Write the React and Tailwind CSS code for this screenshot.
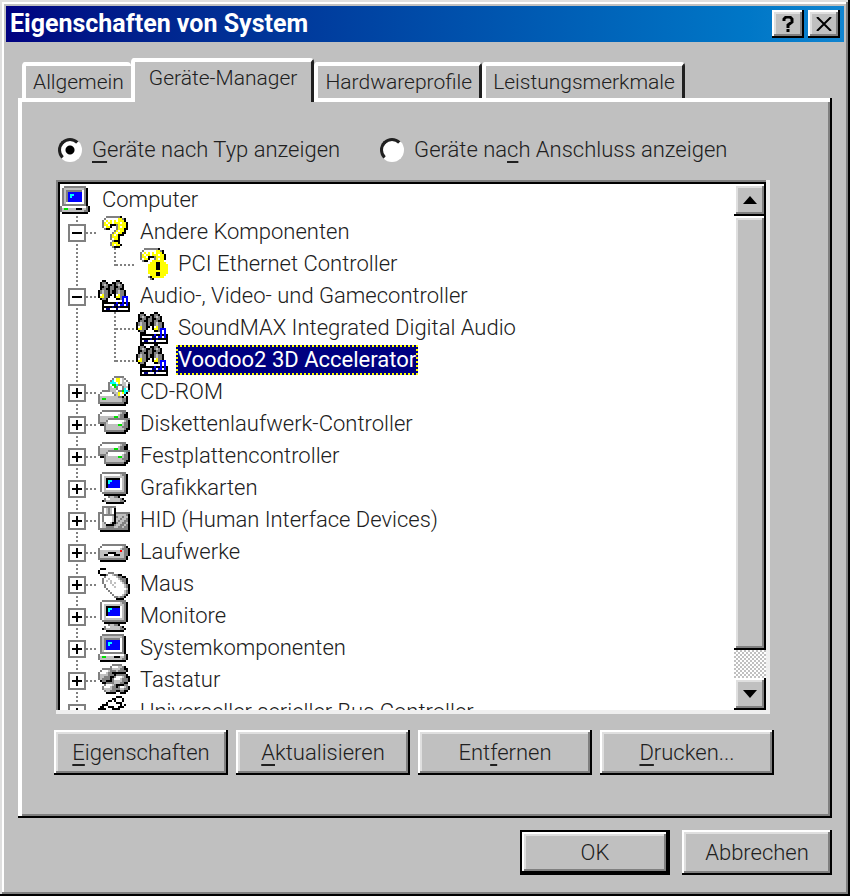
import { useState } from 'react';

const COLORS = {
  k: '#000000',
  g: '#808080',
  l: '#c0c0c0',
  w: '#ffffff',
  b: '#0000ff',
  n: '#000080',
  c: '#00ffff',
  y: '#ffff00',
  e: '#00e000',
  r: '#ff0000',
};

// 16x16 pixel icons, one letter per pixel
const ICONS = {
  computer: [
    '................',
    '..ggggggggggg...',
    '.gllllllllllgk..',
    '.glggggggggwgk..',
    '.glgbbbbbbbwgk..',
    '.glgbccbbbbwgk..',
    '.glgbcbbbbbwgk..',
    '.glgbbbbbbbwgk..',
    '.glgbbbbbbbwgk..',
    '.glwwwwwwwwwgk..',
    '.ggggggggggggk..',
    'gwwwwwwwwwwwwgk.',
    'gleellllkkkllgk.',
    'glllllllllllggk.',
    '.kkkkkkkkkkkkk..',
    '................',
  ],
  monitor: [
    '..gggggggggggg..',
    '.gwwwwwwwwwlggk.',
    '.gwllllllllllgk.',
    '.gwlkkkkkkkwlgk.',
    '.gwlkccbbbbwlgk.',
    '.gwlkcbbbbbwlgk.',
    '.gwlkbbbbbbwlgk.',
    '.gwlkbbbbbbwlgk.',
    '.gwlwwwwwwwwlgk.',
    '.gwllllllllllgk.',
    '..ggggggggggggk.',
    '...kkkkkkkkkkk..',
    '.....gllggk.....',
    '...gwwlllllgk...',
    '..kglllllllggk..',
    '....kkkkkkkkk...',
  ],
  question: [
    '....gggggggk....',
    '...gwwwwwwyygk..',
    '..gwywywywyyyk..',
    '..gywyywyyywyyk.',
    '..gyywkkkgyyyyk.',
    '..gwyyk..gywyyk.',
    '...gkk...gyyykk.',
    '........gywyyk..',
    '.......gywyykk..',
    '......gywykkk...',
    '......gyyyk.....',
    '......gwyyk.....',
    '.......gkkk.....',
    '......gyyyk.....',
    '......gywyyk....',
    '.......gkkk.....',
  ],
  unknown: [
    '....gggggggk....',
    '...gwwwwwwyygk..',
    '..gwywywywyyyk..',
    '..gywyywyyywyyk.',
    '..gyywkkkgyyyyk.',
    '..gwyyk..gywyyk.',
    '...gkk..yyyyyy..',
    '.......yyykkyyy.',
    '......yyyykkyyyy',
    '......yyyykkyyyy',
    '......yyyykkyyyy',
    '......yyyyyyyyyy',
    '......yyyykkyyyy',
    '.......yyykkyyy.',
    '......gkyyyyyy..',
    '.......gk.......',
  ],
  sound: [
    '..kk.....kk.....',
    '.kggk..kkggk....',
    '.kglgkkgkglgk...',
    '.kkggkggkkggk...',
    '.kggkkggkggkk...',
    'kglggkgkkglggk..',
    'kglggkgkkglggk..',
    'kwyggkk.kwyggk..',
    'kyyggk..kyygbbb.',
    '.kggk....kkgb.b.',
    '..kkk.......b.b.',
    '..kkkkkkkbkkbkbk',
    '..kwwwwwnnwbbwbk',
    '..kkkkknkknkkkkk',
    '..kwnnwwwnwwwwwk',
    '..kkkkkkkkkkkkkk',
  ],
  cdrom: [
    '........ggggg...',
    '.......gwyywlg..',
    '......gcwyywlwg.',
    '.....gcccwywllwg',
    '.....gweecggllwk',
    '.....glwegwwgllk',
    '.....glllgwwgcwk',
    '..gggglllwggeccg',
    '.gwwwwwgllywyck.',
    'gwwwwwwwglywwk..',
    'glllllllllggklk.',
    'gleellllllllggk.',
    'glllllllllllggk.',
    'gggggggggggggkk.',
    '.kkkkkkkkkkkkk..',
    '................',
  ],
  drives: [
    '................',
    '..gggggggggggg..',
    '.gwwwwwwwwwlggk.',
    'gwwwwwwwwwlggkk.',
    'gllllllleelggkk.',
    'gllllggggggggggg',
    'glllgwwwwwwwwlgk',
    'gggglwwwwwwwlggk',
    '.kkglllllleelggk',
    '...gllllllllgggk',
    '...glllllllllgkk',
    '...ggggggggggkk.',
    '....kkkkkkkkkk..',
    '................',
    '................',
    '................',
  ],
  hid: [
    '................',
    '..ggggggg.......',
    '..gwlglwk.......',
    '..gwlglwk.......',
    'gggwlglwkggggggg',
    'gwggggggklllllgk',
    'gwgwwwwlkgllgllk',
    'gwgwwwwlkllgllgk',
    'gwgwwwwlklgllggk',
    'gwlgwwlkkgllgglk',
    'gwllkkkkgllgglgk',
    'gwllggggllgglggk',
    'gggggggggggggggk',
    '.kkkkkkkkkkkkkkk',
    '................',
    '................',
  ],
  drive: [
    '................',
    '................',
    '................',
    '................',
    '..gggggggggggg..',
    '.gwwwwwwwwwwlgk.',
    'gwwwwwwwwwwlgggk',
    'gllllllllllrlggk',
    'gllllkkkkllllggk',
    'gllkkwwwkkkllggk',
    'gllllllllllllgk.',
    'ggggggggggggggk.',
    '.kkkkkkkkkkkkk..',
    '................',
    '................',
    '................',
  ],
  mouse: [
    '.kkk............',
    'k...............',
    'k....ggg........',
    '.kkkgwwlggkk....',
    '...gwwwwwlggkk..',
    '..gwwlwwwwlgggk.',
    '..gwlwlwwwwlggk.',
    '..gwwwlwlwwwlgk.',
    '...gwwwlwwwwwlgk',
    '...gwwwwlwwwwlgk',
    '....gwwwwwwwwwlk',
    '.....gwwwwwwwlgk',
    '......gwwwwwwlgk',
    '.......gwwwwlgk.',
    '........gglggk..',
    '.........kkkk...',
  ],
  keyboard: [
    '.......ggggg....',
    '......gwwwllgk..',
    '..gggggllllggkk.',
    '.gwwwlggglggggk.',
    'gwwwlggkkkkkkk..',
    'gllllgggkgggggk.',
    'gllgggkkgwwwlgkk',
    'glggggkgwwwlgggk',
    '.kggkkkgllllgggk',
    '..kkgggglllggkk.',
    '...gwwwlgkkkkgg.',
    '..gwwwlggkgwwlgk',
    '..gllllggggllggk',
    '...gllgggkkggkk.',
    '....kkkkk..kkk..',
    '................',
  ],
  usb: [
    '.........kkk....',
    '.......kk...k...',
    '.....kk.k...k...',
    '....k....kkk....',
    '..kkk......k.k..',
    '.kk..kkk..kkk...',
    'kkkk...kkkk.....',
    '.kk.............',
    '................',
    '................',
    '................',
    '................',
    '................',
    '................',
    '................',
    '................',
  ],
};

const DEVICES = [
  { name: 'Computer', icon: 'computer', level: 0 },
  { name: 'Andere Komponenten', icon: 'question', level: 1, open: true },
  { name: 'PCI Ethernet Controller', icon: 'unknown', level: 2, last: true },
  { name: 'Audio-, Video- und Gamecontroller', icon: 'sound', level: 1, open: true },
  { name: 'SoundMAX Integrated Digital Audio', icon: 'sound', level: 2 },
  { name: 'Voodoo2 3D Accelerator', icon: 'sound', level: 2, last: true },
  { name: 'CD-ROM', icon: 'cdrom', level: 1 },
  { name: 'Diskettenlaufwerk-Controller', icon: 'drives', level: 1 },
  { name: 'Festplattencontroller', icon: 'drives', level: 1 },
  { name: 'Grafikkarten', icon: 'monitor', level: 1 },
  { name: 'HID (Human Interface Devices)', icon: 'hid', level: 1 },
  { name: 'Laufwerke', icon: 'drive', level: 1 },
  { name: 'Maus', icon: 'mouse', level: 1 },
  { name: 'Monitore', icon: 'monitor', level: 1 },
  { name: 'Systemkomponenten', icon: 'computer', level: 1 },
  { name: 'Tastatur', icon: 'keyboard', level: 1 },
  { name: 'Universeller serieller Bus Controller', icon: 'usb', level: 1 },
];

const TABS = ['Allgemein', 'Geräte-Manager', 'Hardwareprofile', 'Leistungsmerkmale'];

const raised =
  'bg-[#c0c0c0] shadow-[inset_-2px_-2px_0_#000,inset_2px_2px_0_#fff,inset_-4px_-4px_0_#808080,inset_4px_4px_0_#dfdfdf]';

function PixelIcon({ name }) {
  return (
    <svg viewBox="0 0 16 16" className="h-8 w-8 shrink-0" shapeRendering="crispEdges" aria-hidden="true">
      {ICONS[name].map((row, y) =>
        row.split('').map((p, x) =>
          p === '.' ? null : <rect key={x + '-' + y} x={x} y={y} width="1" height="1" fill={COLORS[p]} />
        )
      )}
    </svg>
  );
}

// dotted tree lines and the plus / minus box
function Guide({ vertical, horizontal, box, open }) {
  return (
    <svg viewBox="0 0 38 32" className="block h-8 w-[38px]" shapeRendering="crispEdges" aria-hidden="true">
      <line x1="17" y1="0" x2="17" y2={vertical} stroke="#808080" strokeWidth="2" strokeDasharray="2 2" />
      {horizontal && <line x1="18" y1="17" x2="38" y2="17" stroke="#808080" strokeWidth="2" strokeDasharray="2 2" />}
      {box && (
        <>
          <rect x="9" y="9" width="16" height="16" fill="#fff" stroke="#808080" strokeWidth="2" />
          <path d={open ? 'M12 17h10' : 'M12 17h10M17 12v10'} stroke="#000" strokeWidth="2" />
        </>
      )}
    </svg>
  );
}

function DeviceRow({ device, selected, onSelect }) {
  return (
    <li role="treeitem" aria-selected={selected} className="flex h-8 shrink-0 items-center">
      {device.level === 1 && (
        <button aria-label={device.name + ' auf- oder zuklappen'} className="shrink-0">
          <Guide vertical={32} horizontal box open={device.open} />
        </button>
      )}
      {device.level === 2 && (
        <>
          <Guide vertical={32} />
          <Guide vertical={device.last ? 18 : 32} horizontal />
        </>
      )}
      <PixelIcon name={device.icon} />
      <button
        onClick={onSelect}
        className={
          selected
            ? 'ml-2 h-[30px] border-2 border-dotted border-[#ffff00] bg-[#000080] leading-6 font-normal whitespace-nowrap text-white'
            : 'ml-2 h-[30px] border-2 border-transparent leading-6 whitespace-nowrap'
        }
      >
        {device.name}
      </button>
    </li>
  );
}

function ScrollBar() {
  return (
    <div className="flex w-8 shrink-0 flex-col bg-[repeating-conic-gradient(#fff_0_25%,#c0c0c0_0_50%)] bg-[length:4px_4px]">
      <button aria-label="Nach oben" className={'flex h-8 items-center justify-center ' + raised}>
        <svg viewBox="0 0 14 8" className="h-2 w-[14px]" aria-hidden="true">
          <path d="M7 0L14 8H0z" />
        </svg>
      </button>
      <div className={'mb-7 flex-1 ' + raised} />
      <button aria-label="Nach unten" className={'flex h-8 items-center justify-center ' + raised}>
        <svg viewBox="0 0 14 8" className="h-2 w-[14px]" aria-hidden="true">
          <path d="M7 8L14 0H0z" />
        </svg>
      </button>
    </div>
  );
}

function Radio({ id, checked, onChange, children }) {
  return (
    <div className="flex items-center gap-[10px]">
      <input
        type="radio"
        name="view"
        id={id}
        checked={checked}
        onChange={onChange}
        className="h-6 w-6 appearance-none rounded-full border-[3px] border-t-[#202020] border-r-white border-b-white border-l-[#202020] bg-white checked:bg-[radial-gradient(circle,#000_0_4px,#fff_5px)]"
      />
      <label htmlFor={id}>{children}</label>
    </div>
  );
}

export default function App() {
  const [tab, setTab] = useState('Geräte-Manager');
  const [view, setView] = useState('type');
  const [selected, setSelected] = useState('Voodoo2 3D Accelerator');

  return (
    <div className="min-h-screen w-full bg-[#c0c0c0] p-[6px] font-['Roboto','Liberation_Sans',sans-serif] text-[22px] leading-7 font-light text-[#202020] shadow-[inset_-2px_-2px_0_#000,inset_2px_2px_0_#dfdfdf,inset_-4px_-4px_0_#808080,inset_4px_4px_0_#fff]">
      <header className="flex h-9 items-center bg-linear-to-r from-[#000080] to-[#1084d0] px-1">
        <h1 className="flex-1 text-[25px] font-bold text-white">Eigenschaften von System</h1>
        <button aria-label="Hilfe" className={'mr-1 flex h-7 w-8 items-center justify-center ' + raised}>
          <svg viewBox="0 0 12 16" className="h-4 w-3" fill="none" stroke="#000" strokeWidth="3" aria-hidden="true">
            <path d="M2 5V3L4 1H8L10 3V6L6 9V12M6 13V16" />
          </svg>
        </button>
        <button aria-label="Schließen" className={'flex h-7 w-8 items-center justify-center ' + raised}>
          <svg viewBox="0 0 16 14" className="h-[14px] w-4" stroke="#000" strokeWidth="2" aria-hidden="true">
            <path d="M1 0L15 14M15 0L1 14" />
          </svg>
        </button>
      </header>

      <main className="px-3 pt-4">
        <div role="tablist" className="flex h-10 items-end pl-1 text-[21px]">
          {TABS.map((name) => (
            <button
              key={name}
              role="tab"
              aria-selected={tab === name}
              onClick={() => setTab(name)}
              className={
                tab === name
                  ? 'relative z-10 -mb-1 h-11 rounded-t-[4px] border-t-4 border-r-[3px] border-l-4 border-t-white border-r-[#202020] border-l-white bg-[#c0c0c0] px-[14px] pb-2'
                  : 'h-9 rounded-t-[4px] border-t-4 border-r-[3px] border-l-4 border-t-white border-r-[#202020] border-l-white px-[7px] first:border-r-0'
              }
            >
              {name}
            </button>
          ))}
        </div>

        <section
          role="tabpanel"
          className="pt-[38px] pr-[58px] pb-[43px] pl-9 shadow-[inset_-2px_-2px_0_#000,inset_4px_4px_0_#fff,inset_-4px_-4px_0_#808080]"
        >
          <div className="flex gap-10 pl-1">
            <Radio id="by-type" checked={view === 'type'} onChange={() => setView('type')}>
              <u className="underline-offset-4">G</u>eräte nach Typ anzeigen
            </Radio>
            <Radio id="by-port" checked={view === 'port'} onChange={() => setView('port')}>
              Geräte na<u className="underline-offset-4">c</u>h Anschluss anzeigen
            </Radio>
          </div>

          <div className="mt-4 mr-1 ml-[2px] flex h-[534px] bg-white p-1 shadow-[inset_-4px_-4px_0_#efefef,inset_2px_2px_0_#808080,inset_4px_4px_0_#000]">
            <ul role="tree" className="flex flex-1 flex-col overflow-hidden">
              {DEVICES.map((device) => (
                <DeviceRow
                  key={device.name}
                  device={device}
                  selected={selected === device.name}
                  onSelect={() => setSelected(device.name)}
                />
              ))}
            </ul>
            <ScrollBar />
          </div>

          <div className="mt-4 grid grid-cols-4 gap-2">
            <button className={'h-[45px] ' + raised}>
              <u className="underline-offset-4">E</u>igenschaften
            </button>
            <button className={'h-[45px] ' + raised}>
              <u className="underline-offset-4">A</u>ktualisieren
            </button>
            <button className={'h-[45px] ' + raised}>
              Ent<u className="underline-offset-4">f</u>ernen
            </button>
            <button className={'h-[45px] ' + raised}>
              <u className="underline-offset-4">D</u>rucken...
            </button>
          </div>
        </section>

        <footer className="flex justify-end gap-3 pt-3 pb-[15px]">
          <button className={'w-[150px] border-2 border-black ' + raised}>OK</button>
          <button className={'h-[45px] w-[150px] ' + raised}>Abbrechen</button>
        </footer>
      </main>
    </div>
  );
}
